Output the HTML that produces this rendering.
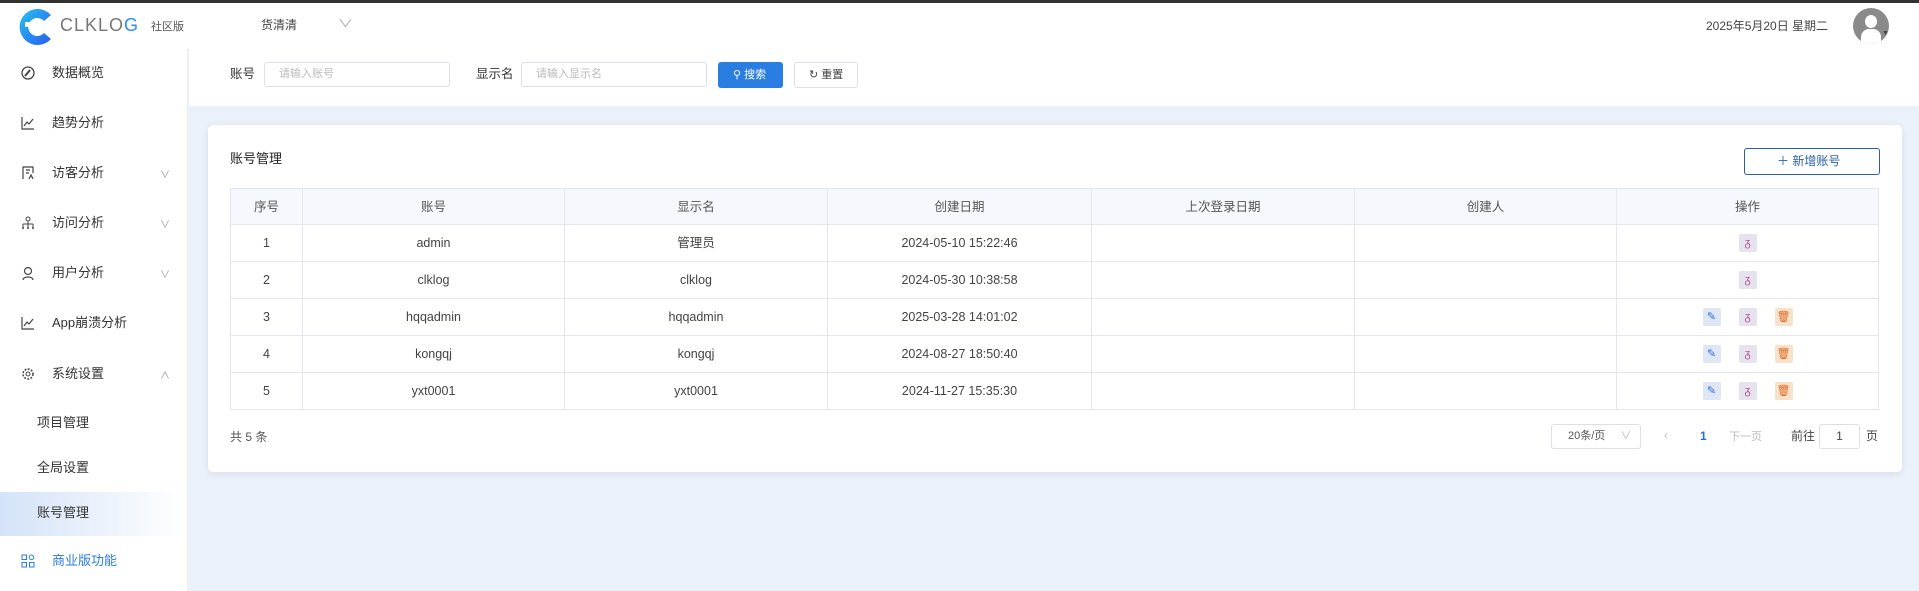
<!DOCTYPE html>
<html><head><meta charset="utf-8"><style>
*{box-sizing:border-box;margin:0;padding:0}
body{width:1919px;height:591px;overflow:hidden;background:#eaf1fa;font-family:"Liberation Sans","Noto Sans CJK SC",sans-serif;color:#333;position:relative;font-size:13px}
.abs{position:absolute}
.top{left:0;top:0;width:1919px;height:3px;background:#333}
.hdr{left:0;top:3px;width:1919px;height:46px;background:#fff;box-shadow:0 1px 3px rgba(0,0,0,.06)}
.side{left:0;top:49px;width:188px;height:542px;background:#fff;border-right:1px solid #eee}
.mi{position:absolute;left:52px;font-size:13px;color:#333;line-height:16px}
.ic{position:absolute;left:21px;width:14px;height:14px}
.chev{position:absolute;left:160px;font-size:10px;color:#999}
.search{left:189px;top:49px;width:1730px;height:57px;background:#fff}
.inp{position:absolute;height:25px;border:1px solid #dcdfe6;border-radius:3px;font-size:11px;color:#bbb;padding:0 14px;line-height:23px}
.card{left:208px;top:125px;width:1694px;height:347px;background:#fff;border-radius:5px;box-shadow:0 2px 8px rgba(0,0,0,.08)}
table{position:absolute;left:230px;top:188px;width:1649px;border-collapse:collapse;font-size:12.5px}
td,th{border:1px solid #e4e7ed;text-align:center;height:37px;line-height:16px;color:#444;font-weight:normal;vertical-align:middle}
th{background:#f5f8fc;height:36px;color:#555}
.b{display:inline-block;width:18px;height:18px;line-height:18px;vertical-align:middle;margin:0 9px;border-radius:2px;position:relative}
</style></head><body>
<div class="abs top"></div>
<div class="abs hdr">
 <svg class="abs" style="left:17px;top:4px" width="40" height="40" viewBox="0 0 40 40"><defs><linearGradient id="g" x1="0" y1="0" x2="1" y2="1"><stop offset="0" stop-color="#27c2f0"/><stop offset="1" stop-color="#2a5cf0"/></linearGradient></defs><path d="M34 8A18 18 0 1 0 34 32L27 26A9 9 0 1 1 27 14Z" fill="url(#g)"/><rect x="8" y="15" width="5" height="5" fill="#fff"/><rect x="14" y="19" width="5" height="5" fill="#fff"/><rect x="20" y="15" width="4" height="4" fill="#fff"/></svg>
 <div class="abs" style="left:60px;top:12px;font-size:18px;letter-spacing:1px;color:#777;line-height:20px">CLKLO<span style="color:#2a8ef0">G</span></div>
 <div class="abs" style="left:151px;top:15px;font-size:11px;color:#555">社区版</div>
 <div class="abs" style="left:261px;top:13px;font-size:12px;color:#444">货清清</div>
 <div class="abs" style="left:340px;top:12px;font-size:11px;color:#aaa;transform:scaleX(1.4)">∨</div>
 <div class="abs" style="left:1706px;top:14px;font-size:12px;color:#444">2025年5月20日 星期二</div>
 <div class="abs" style="left:1853px;top:5px;width:36px;height:36px;border-radius:50%;background:#8a8a8a;overflow:hidden"><div class="abs" style="left:12px;top:7px;width:12px;height:13px;border-radius:50%;background:#fff"></div><div class="abs" style="left:8px;top:21px;width:20px;height:16px;border-radius:8px 8px 0 0;background:#fff"></div></div>
 <div class="abs" style="left:1882px;top:27px;font-size:7px;color:#444">▼</div>
</div>
<div class="abs side">
 <svg class="ic" style="top:17px" viewBox="0 0 14 14"><circle cx="7" cy="7" r="6" fill="none" stroke="#444" stroke-width="1.3"/><path d="M4 10L9 4" stroke="#444" stroke-width="2"/></svg><div class="mi" style="top:16px">数据概览</div>
 <svg class="ic" style="top:67px" viewBox="0 0 14 14"><path d="M1 1V13H13M3 10L6 6L8 8L12 3" fill="none" stroke="#444" stroke-width="1.2"/></svg><div class="mi" style="top:66px">趋势分析</div>
 <svg class="ic" style="top:117px" viewBox="0 0 14 14"><path d="M2 13V1H12V7M5 4H9M5 7H8M8 13L10 9L12 13" fill="none" stroke="#444" stroke-width="1.2"/></svg><div class="mi" style="top:116px">访客分析</div><div class="chev" style="top:117px">∨</div>
 <svg class="ic" style="top:167px" viewBox="0 0 14 14"><circle cx="7" cy="3" r="2" fill="none" stroke="#444"/><path d="M7 5V8M2 8H12M2 8V11M7 8V11M12 8V11" fill="none" stroke="#444"/><circle cx="2" cy="12" r="1" fill="#444"/><circle cx="7" cy="12" r="1" fill="#444"/><circle cx="12" cy="12" r="1" fill="#444"/></svg><div class="mi" style="top:166px">访问分析</div><div class="chev" style="top:167px">∨</div>
 <svg class="ic" style="top:217px" viewBox="0 0 14 14"><circle cx="7" cy="5" r="3.5" fill="none" stroke="#444" stroke-width="1.2"/><path d="M2 14C2 10 12 10 12 14" fill="none" stroke="#444" stroke-width="1.2"/></svg><div class="mi" style="top:216px">用户分析</div><div class="chev" style="top:217px">∨</div>
 <svg class="ic" style="top:267px" viewBox="0 0 14 14"><path d="M1 1V13H13M3 10L6 6L8 8L12 3" fill="none" stroke="#444" stroke-width="1.2"/></svg><div class="mi" style="top:266px">App崩溃分析</div>
 <svg class="ic" style="top:318px" viewBox="0 0 14 14"><circle cx="7" cy="7" r="5" fill="none" stroke="#444" stroke-width="1.5" stroke-dasharray="2 1.3"/><circle cx="7" cy="7" r="2" fill="none" stroke="#444"/></svg><div class="mi" style="top:317px">系统设置</div><div class="chev" style="top:318px">∧</div>
 <div class="mi" style="left:37px;top:366px">项目管理</div>
 <div class="mi" style="left:37px;top:411px">全局设置</div>
 <div class="abs" style="left:0;top:443px;width:187px;height:44px;background:linear-gradient(90deg,#d4e3f8,#fff)"></div>
 <div class="mi" style="left:37px;top:456px">账号管理</div>
 <svg class="ic" style="top:505px" viewBox="0 0 14 14"><rect x="1" y="1" width="4.5" height="4.5" fill="none" stroke="#2a7de1"/><circle cx="10.5" cy="3.3" r="2.3" fill="none" stroke="#2a7de1"/><rect x="1" y="8.5" width="4.5" height="4.5" fill="none" stroke="#2a7de1"/><rect x="8.5" y="8.5" width="4.5" height="4.5" fill="none" stroke="#2a7de1"/></svg><div class="mi" style="top:504px;color:#2a7de1">商业版功能</div>
</div>
<div class="abs search">
 <div class="abs" style="left:41px;top:17px;font-size:12.5px;line-height:16px">账号</div>
 <div class="inp" style="left:75px;top:13px;width:186px">请输入账号</div>
 <div class="abs" style="left:287px;top:17px;font-size:12.5px;line-height:16px">显示名</div>
 <div class="inp" style="left:332px;top:13px;width:186px">请输入显示名</div>
 <div class="abs" style="left:529px;top:13px;width:65px;height:26px;background:#2a7de1;border-radius:3px;color:#fff;font-size:11px;line-height:26px;padding-left:15px">⚲ 搜索</div>
 <div class="abs" style="left:605px;top:13px;width:64px;height:26px;border:1px solid #dcdfe6;border-radius:3px;font-size:11px;line-height:24px;padding-left:14px;color:#444">↻ 重置</div>
</div>
<div class="abs card"></div>
<div class="abs" style="left:230px;top:151px;font-size:13px;color:#222;line-height:16px">账号管理</div>
<div class="abs" style="left:1744px;top:148px;width:136px;height:27px;border:1px solid #2a5fa8;border-radius:3px;color:#2a5fa8;font-size:12px;line-height:25px;padding-left:32px">＋ 新增账号</div>
<table>
<tr><th style="width:72px">序号</th><th style="width:262px">账号</th><th style="width:263px">显示名</th><th style="width:264px">创建日期</th><th style="width:263px">上次登录日期</th><th style="width:262px">创建人</th><th>操作</th></tr>
<tr><td>1</td><td>admin</td><td>管理员</td><td>2024-05-10 15:22:46</td><td></td><td></td><td><span class="b" style="background:#e6e3ee;color:#b05a9a;font-size:11px">ᵹ</span></td></tr>
<tr><td>2</td><td>clklog</td><td>clklog</td><td>2024-05-30 10:38:58</td><td></td><td></td><td><span class="b" style="background:#e6e3ee;color:#b05a9a;font-size:11px">ᵹ</span></td></tr>
<tr><td>3</td><td>hqqadmin</td><td>hqqadmin</td><td>2025-03-28 14:01:02</td><td></td><td></td><td><span class="b" style="background:#dfe6f5;color:#2a6de1;font-size:11px">✎</span><span class="b" style="background:#e6e3ee;color:#b05a9a;font-size:11px">ᵹ</span><span class="b" style="background:#f8e2cc;color:#e06a20;font-size:11px">🗑</span></td></tr>
<tr><td>4</td><td>kongqj</td><td>kongqj</td><td>2024-08-27 18:50:40</td><td></td><td></td><td><span class="b" style="background:#dfe6f5;color:#2a6de1;font-size:11px">✎</span><span class="b" style="background:#e6e3ee;color:#b05a9a;font-size:11px">ᵹ</span><span class="b" style="background:#f8e2cc;color:#e06a20;font-size:11px">🗑</span></td></tr>
<tr><td>5</td><td>yxt0001</td><td>yxt0001</td><td>2024-11-27 15:35:30</td><td></td><td></td><td><span class="b" style="background:#dfe6f5;color:#2a6de1;font-size:11px">✎</span><span class="b" style="background:#e6e3ee;color:#b05a9a;font-size:11px">ᵹ</span><span class="b" style="background:#f8e2cc;color:#e06a20;font-size:11px">🗑</span></td></tr>
</table>
<div class="abs" style="left:230px;top:430px;font-size:12px;color:#555;line-height:14px">共 5 条</div>
<div class="abs" style="left:1551px;top:424px;width:90px;height:25px;border:1px solid #dcdfe6;border-radius:3px;font-size:11px;color:#555;line-height:23px;padding-left:16px">20条/页 <span style="color:#bbb;margin-left:12px">∨</span></div>
<div class="abs" style="left:1664px;top:428px;font-size:12px;color:#bbb">‹</div>
<div class="abs" style="left:1700px;top:429px;font-size:12px;color:#2a6de1;font-weight:bold">1</div>
<div class="abs" style="left:1729px;top:430px;font-size:11px;color:#bbb;line-height:14px">下一页</div>
<div class="abs" style="left:1791px;top:429px;font-size:12px;color:#444;line-height:14px">前往</div>
<div class="abs" style="left:1819px;top:424px;width:41px;height:25px;border:1px solid #dcdfe6;border-radius:3px;font-size:12px;text-align:center;line-height:23px;color:#444">1</div>
<div class="abs" style="left:1866px;top:429px;font-size:12px;color:#444;line-height:14px">页</div>
</body></html>
